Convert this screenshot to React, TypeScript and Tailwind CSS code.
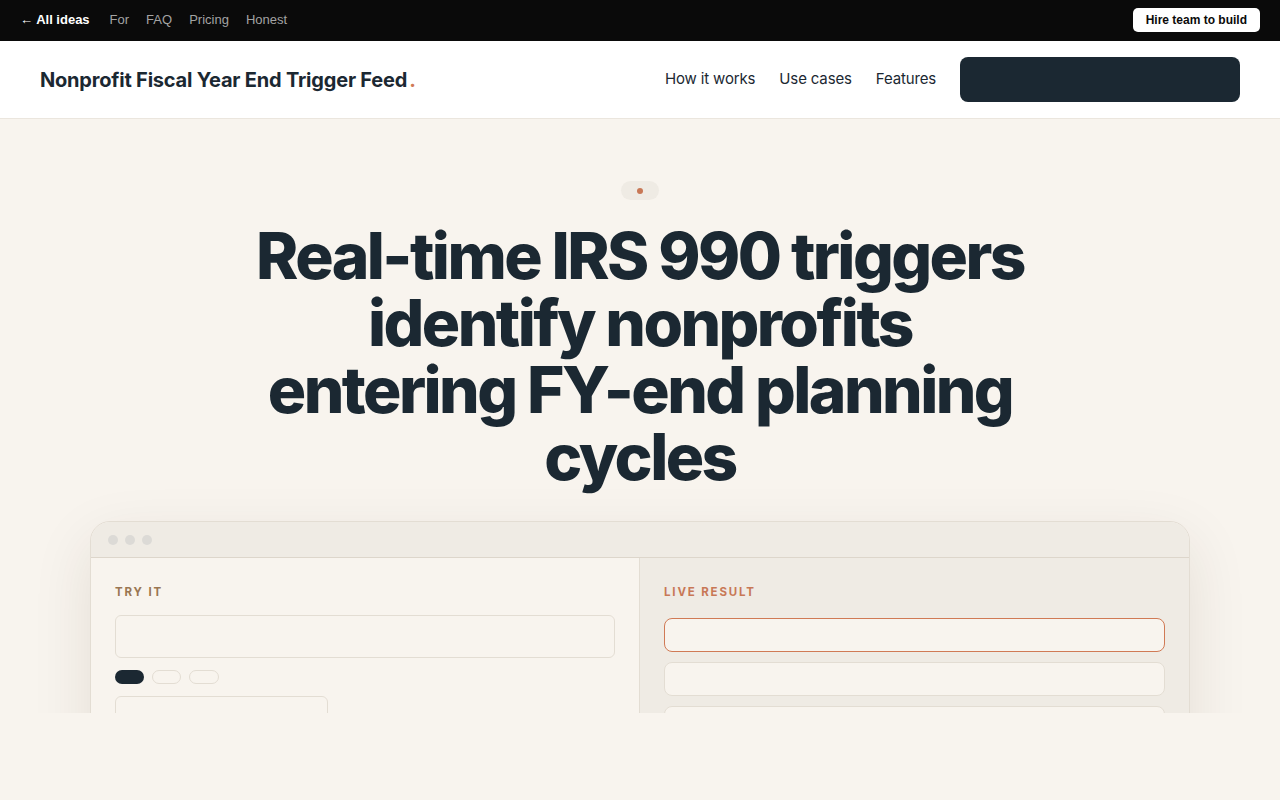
import React from "react";

const ink = "text-[#1b2832]";

function TopBar() {
  return (
    <div className="flex h-[41px] items-center justify-between bg-[#0a0a0a] px-5 pb-[2px] font-['Liberation_Sans',Arial,sans-serif] text-[13px]">
      <div className="flex items-center">
        <a className="font-bold text-white">← All ideas</a>
        <nav className="ml-[20px] flex items-center gap-[17px] text-[#a3a3a3]">
          <a>For</a>
          <a>FAQ</a>
          <a>Pricing</a>
          <a>Honest</a>
        </nav>
      </div>
      <button className="h-6 rounded-[5px] bg-white px-[13px] text-[12px] font-bold text-[#0a0a0a]">
        Hire team to build
      </button>
    </div>
  );
}

function Header() {
  return (
    <header className="flex h-[78px] items-center justify-between border-b border-[#ebe6de] bg-white pl-10 pr-10 font-['Inter',sans-serif]">
      <div className={`text-[20px] font-bold tracking-[-0.01em] ${ink}`}>
        Nonprofit Fiscal Year End Trigger Feed<span className="ml-[2px] text-[#d07a55]">.</span>
      </div>
      <div className="flex items-center">
        <nav className={`flex items-center gap-6 text-[15px] tracking-[-0.01em] ${ink}`}>
          <a>How it works</a>
          <a>Use cases</a>
          <a>Features</a>
        </nav>
        <button className="ml-6 h-[45px] w-[280px] rounded-lg bg-[#1b2832]" aria-label="Get started" />
      </div>
    </header>
  );
}

function Card() {
  return (
    <div className="mx-auto w-[1100px] overflow-hidden rounded-t-[20px] border border-[#e3ddd3] bg-[#f8f4ee] shadow-[0_20px_60px_rgba(60,40,20,0.10)]">
      <div className="flex h-9 items-center gap-[7px] border-b border-[#ddd6cb] bg-[#efebe4] pl-[17px]">
        <span className="h-[10px] w-[10px] rounded-full bg-[#dcdad6]" />
        <span className="h-[10px] w-[10px] rounded-full bg-[#dcdad6]" />
        <span className="h-[10px] w-[10px] rounded-full bg-[#dcdad6]" />
      </div>
      <div className="grid h-[400px] grid-cols-2 font-['Inter',sans-serif]">
        <div className="border-r border-[#e3ddd3] bg-[#f8f4ee] px-6 pt-[26px]">
          <div className="text-[11.5px] font-bold leading-[16px] tracking-[0.16em] text-[#9a7652]">TRY IT</div>
          <div className="mt-[15px] h-[43px] rounded-md border border-[#e3ddd3]" />
          <div className="mt-3 flex gap-2">
            <span className="h-[14px] w-[29px] rounded-full bg-[#1b2832]" />
            <span className="h-[14px] w-[29px] rounded-full border border-[#e3ddd3]" />
            <span className="h-[14px] w-[30px] rounded-full border border-[#e3ddd3]" />
          </div>
          <div className="mt-3 h-[43px] w-[213px] rounded-md border border-[#e3ddd3]" />
        </div>
        <div className="bg-[#efebe4] px-6 pt-[26px]">
          <div className="text-[11.5px] font-bold leading-[16px] tracking-[0.16em] text-[#c87856]">LIVE RESULT</div>
          <div className="mt-[18px] flex flex-col gap-[10px]">
            <div className="h-[34px] rounded-lg border border-[#d07a55] bg-[#f8f4ee]" />
            <div className="h-[34px] rounded-lg border border-[#e3ddd3] bg-[#f8f4ee]" />
            <div className="h-[34px] rounded-lg border border-[#e3ddd3] bg-[#f8f4ee]" />
          </div>
        </div>
      </div>
    </div>
  );
}

export default function App() {
  return (
    <div className="min-h-[800px] bg-[#f8f4ee]">
      <TopBar />
      <Header />
      <section className="h-[594px] overflow-hidden pt-[62px]">
        <div className="flex justify-center">
          <span className="flex h-[19px] w-[38px] items-center justify-center rounded-full bg-[#efebe4]">
            <span className="h-[6px] w-[6px] rounded-full bg-[#c87856]" />
          </span>
        </div>
        <h1 className={`mx-auto mt-[22px] max-w-[790px] text-center font-['Inter',sans-serif] text-[64px] font-extrabold leading-[67px] tracking-[-0.04em] ${ink}`}>
          Real-time IRS 990 triggers identify nonprofits entering FY-end planning cycles
        </h1>
        <div className="mt-[31px]">
          <Card />
        </div>
      </section>
    </div>
  );
}
